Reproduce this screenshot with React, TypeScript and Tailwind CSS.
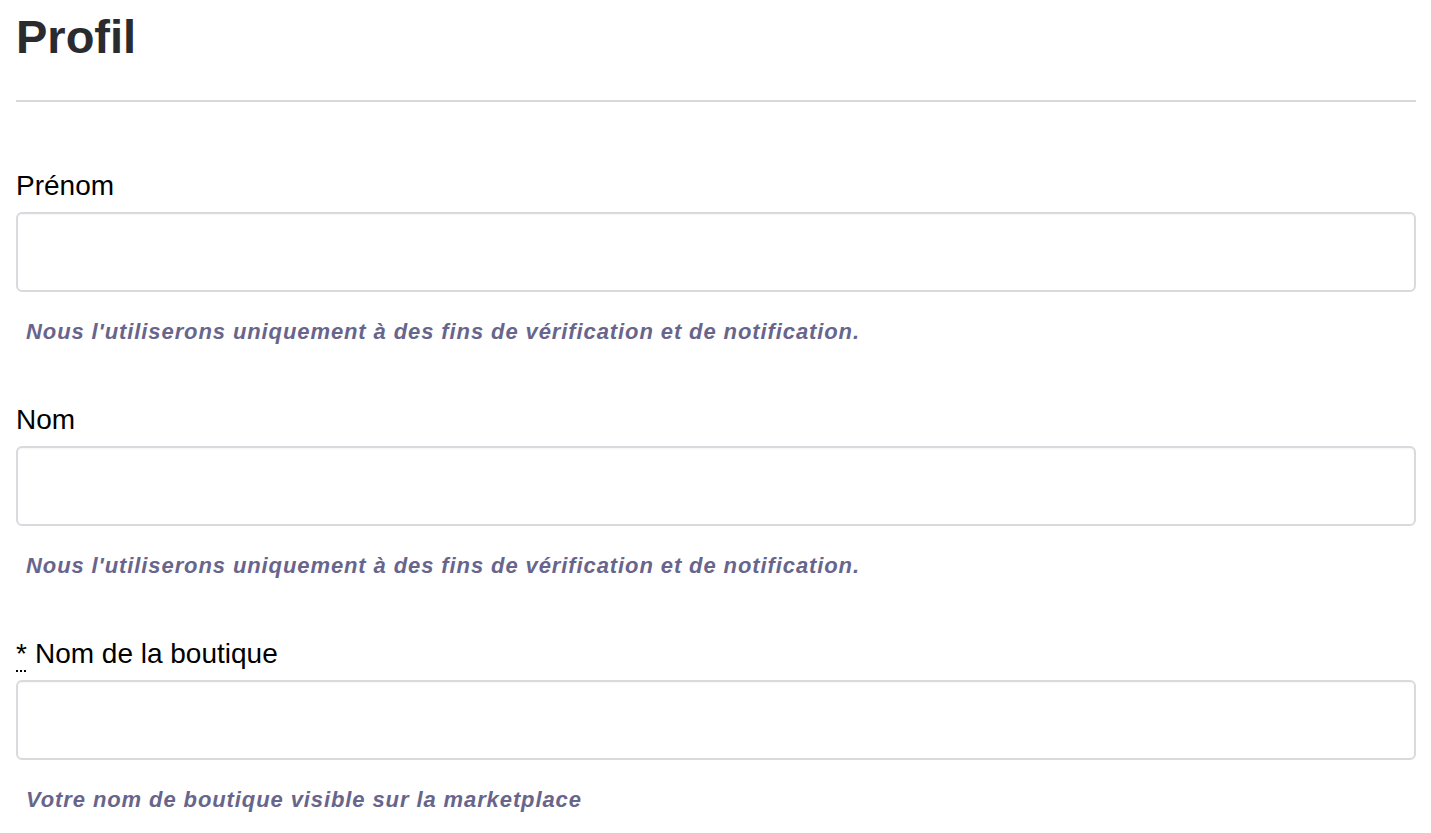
import { JSX } from "react";

type FieldProps = {
    label: string;
    help: string;
    required?: boolean;
};

function Field({ label, help, required }: FieldProps): JSX.Element {
    return (
        <div className="flex flex-col">
            <label className="text-[28px] leading-[30px] text-black">
                {required && (
                    <abbr title="obligatoire" className="underline decoration-dotted decoration-2 underline-offset-[7px] mr-[8px]">*</abbr>
                )}
                {label}
            </label>
            <input
                type="text"
                className="mt-[11px] h-[80px] w-full rounded-[6px] border-2 border-[#d8dadd] bg-white px-4 text-[22px] shadow-[inset_0_1px_2px_rgba(0,0,0,0.04)] focus:outline-none"
            />
            {/* texte d'aide sous le champ */}
            <p className="mt-[28px] pl-[10px] text-[22px] leading-[24px] tracking-[0.9px] font-bold italic text-[#68658c]">
                {help}
            </p>
        </div>
    );
}

export default function App(): JSX.Element {
    return (
        <div className="min-h-screen bg-white pl-4 pr-[15px] font-['Liberation_Sans',Arial,sans-serif]">
            <h1 className="pt-3 text-[47px] leading-[50px] font-bold text-[#2a2b2f]">Profil</h1>
            <hr className="mt-[38px] border-0 border-t-2 border-[#d6d8db]" />

            <div className="mt-[69px] flex flex-col gap-[61px]">
                <Field label="Prénom" help="Nous l'utiliserons uniquement à des fins de vérification et de notification." />
                <Field label="Nom" help="Nous l'utiliserons uniquement à des fins de vérification et de notification." />
                <Field label="Nom de la boutique" help="Votre nom de boutique visible sur la marketplace" required />
            </div>
        </div>
    );
}
